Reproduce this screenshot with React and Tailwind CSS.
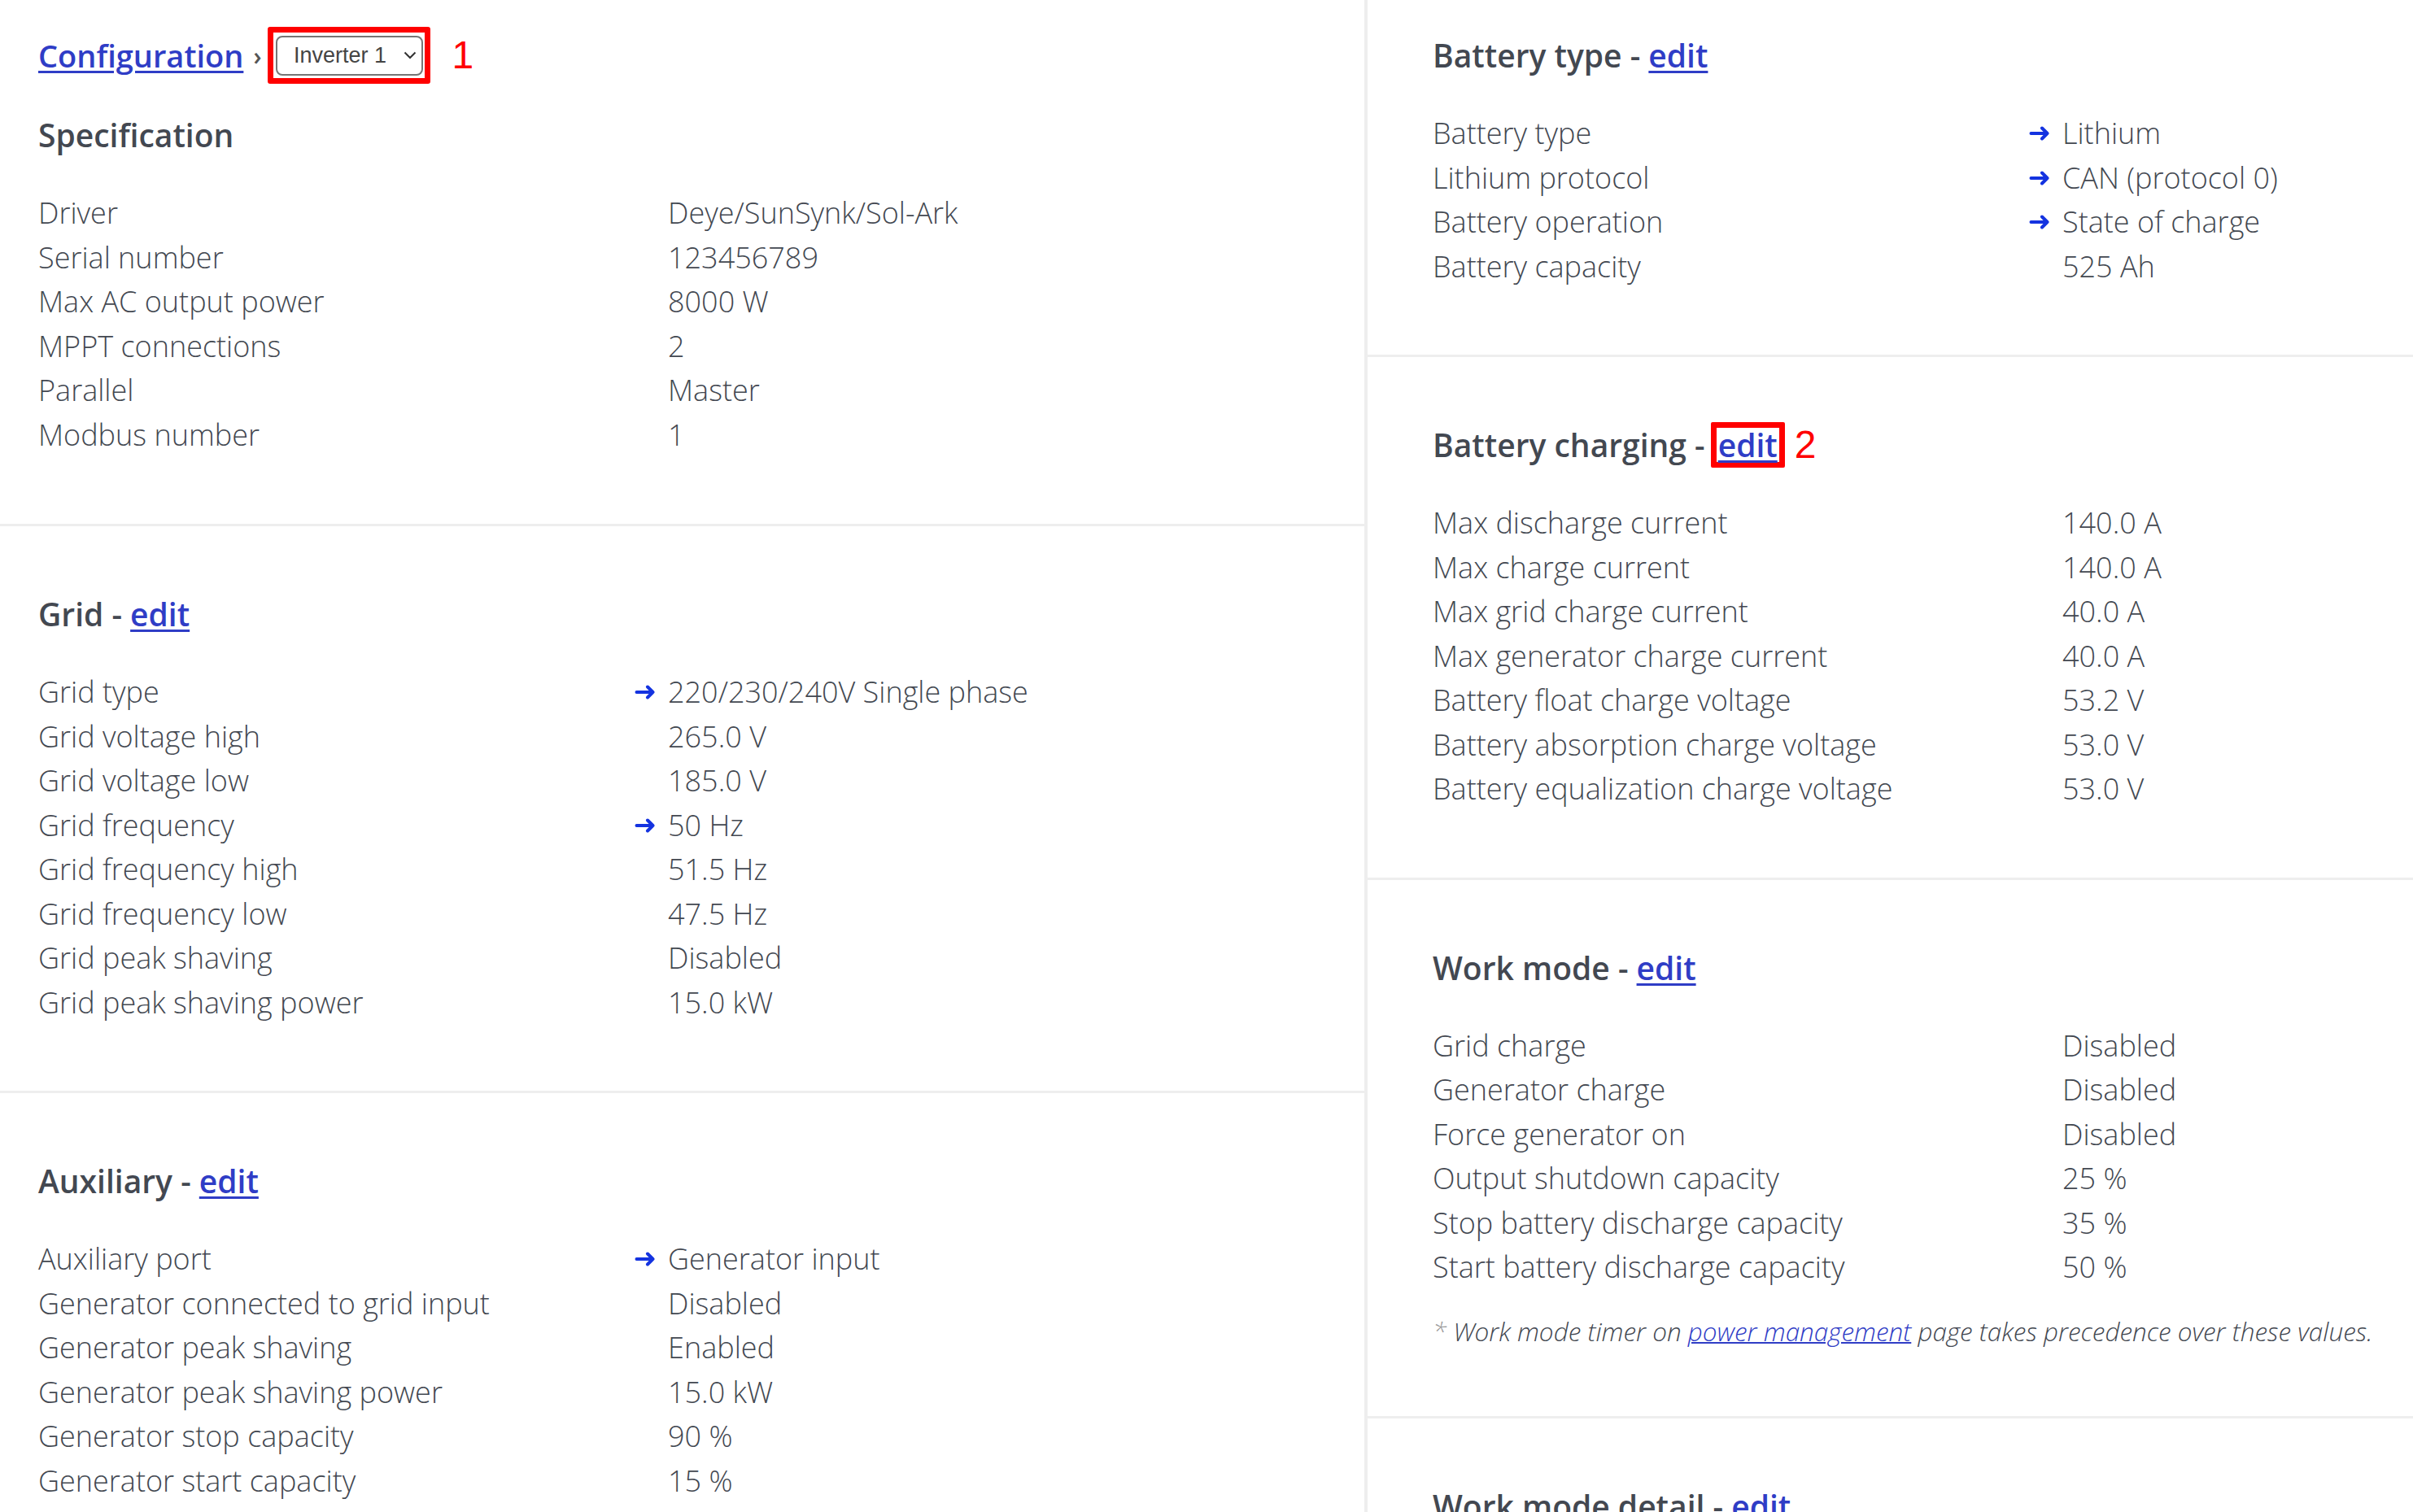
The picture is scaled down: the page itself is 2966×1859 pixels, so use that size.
import React from 'react';

const spec = [
  ['Driver', 'Deye/SunSynk/Sol-Ark'],
  ['Serial number', '123456789'],
  ['Max AC output power', '8000 W'],
  ['MPPT connections', '2'],
  ['Parallel', 'Master'],
  ['Modbus number', '1'],
];

const grid = [
  ['Grid type', '220/230/240V Single phase', true],
  ['Grid voltage high', '265.0 V'],
  ['Grid voltage low', '185.0 V'],
  ['Grid frequency', '50 Hz', true],
  ['Grid frequency high', '51.5 Hz'],
  ['Grid frequency low', '47.5 Hz'],
  ['Grid peak shaving', 'Disabled'],
  ['Grid peak shaving power', '15.0 kW'],
];

const auxiliary = [
  ['Auxiliary port', 'Generator input', true],
  ['Generator connected to grid input', 'Disabled'],
  ['Generator peak shaving', 'Enabled'],
  ['Generator peak shaving power', '15.0 kW'],
  ['Generator stop capacity', '90 %'],
  ['Generator start capacity', '15 %'],
  ['Generator max run time', '24.0 h'],
];

const batteryType = [
  ['Battery type', 'Lithium', true],
  ['Lithium protocol', 'CAN (protocol 0)', true],
  ['Battery operation', 'State of charge', true],
  ['Battery capacity', '525 Ah'],
];

const batteryCharging = [
  ['Max discharge current', '140.0 A'],
  ['Max charge current', '140.0 A'],
  ['Max grid charge current', '40.0 A'],
  ['Max generator charge current', '40.0 A'],
  ['Battery float charge voltage', '53.2 V'],
  ['Battery absorption charge voltage', '53.0 V'],
  ['Battery equalization charge voltage', '53.0 V'],
];

const workMode = [
  ['Grid charge', 'Disabled'],
  ['Generator charge', 'Disabled'],
  ['Force generator on', 'Disabled'],
  ['Output shutdown capacity', '25 %'],
  ['Stop battery discharge capacity', '35 %'],
  ['Start battery discharge capacity', '50 %'],
];

const Arrow = () => (
  <svg width="26" height="18" viewBox="0 0 26 18" fill="none" className="text-[#1433e0]">
    <path d="M2.5 9H22.5M16 2.5L22.5 9L16 15.5" stroke="currentColor" strokeWidth="4" strokeLinecap="round" strokeLinejoin="round" />
  </svg>
);

const Rows = ({ items }) => (
  <div className="mt-[39px]">
    {items.map(([label, value, changed]) => (
      <div key={label} className="flex leading-[54.5px]">
        <div className="w-[733px] shrink-0">{label}</div>
        <div className="w-[41px] shrink-0 flex items-center">{changed && <Arrow />}</div>
        <div>{value}</div>
      </div>
    ))}
  </div>
);

const EditLink = () => (
  <a href="#" className="text-[#2f3dc6] underline decoration-[3px] underline-offset-[4px]">edit</a>
);

const Heading = ({ title, edit }) => (
  <h2 className="text-[39px] font-semibold leading-[60px]">
    {title}
    {edit && <> - <EditLink /></>}
  </h2>
);

const Section = ({ side, first, children }) => (
  <section
    className={`border-b-[3px] border-[#eeeeee] ${side === 'left' ? 'pl-[47px]' : 'pl-[80px]'} ${first ? '' : 'pt-[78px]'} pb-[81px]`}
  >
    {children}
  </section>
);

const App = () => {
  return (
    <div className="flex w-[2966px] h-[1859px] overflow-hidden bg-white text-[#434851] font-['Open_Sans','Liberation_Sans',sans-serif] font-light text-[36px]">
      {/* left column */}
      <div className="w-[1677px] shrink-0">
        <section className="border-b-[3px] border-[#eeeeee] pl-[47px] pt-[34px] pb-[82px]">
          <div className="flex items-center h-[68px]">
            <a href="#" className="text-[38px] font-semibold text-[#2f3dc6] underline decoration-[3px] underline-offset-[4px]">Configuration</a>
            <span className="ml-[12px] mr-[8px] text-[30px] font-semibold text-[#555]">›</span>
            <div className="w-[200px] h-[70px] border-[7px] border-[#ff0000] rounded-[3px] flex items-center justify-center">
              <div className="w-[181px] h-[49px] border-2 border-[#767676] rounded-[8px] flex items-center justify-between pl-[20px] pr-[6px] font-['Liberation_Sans',sans-serif] font-normal text-[27px] text-[#444]">
                <span>Inverter 1</span>
                <svg width="16" height="10" viewBox="0 0 16 10" fill="none">
                  <path d="M1.5 1.5L8 8L14.5 1.5" stroke="#333" strokeWidth="2" />
                </svg>
              </div>
            </div>
            <span className="ml-[26px] text-[48px] text-[#ff0000] font-['Liberation_Sans',sans-serif] font-normal">1</span>
          </div>
          <div className="mt-[34px]">
            <Heading title="Specification" />
          </div>
          <Rows items={spec} />
        </section>

        <Section side="left">
          <Heading title="Grid" edit />
          <Rows items={grid} />
        </Section>

        <Section side="left">
          <Heading title="Auxiliary" edit />
          <Rows items={auxiliary} />
        </Section>
      </div>

      <div className="w-[4px] shrink-0 bg-[#eeeeee]" />

      {/* right column */}
      <div className="flex-1">
        <section className="border-b-[3px] border-[#eeeeee] pl-[80px] pt-[38px] pb-[81px]">
          <Heading title="Battery type" edit />
          <Rows items={batteryType} />
        </section>

        <Section side="right">
          <h2 className="text-[39px] font-semibold leading-[60px] flex items-center">
            <span>Battery charging -</span>
            <span className="ml-[7px] border-[7px] border-[#ff0000] rounded-[2px] px-[2px] leading-[42px]">
              <EditLink />
            </span>
            <span className="ml-[12px] text-[48px] text-[#ff0000] font-['Liberation_Sans',sans-serif] font-normal">2</span>
          </h2>
          <Rows items={batteryCharging} />
        </Section>

        <Section side="right">
          <Heading title="Work mode" edit />
          <Rows items={workMode} />
          <p className="mt-[28px] text-[31.5px] italic leading-[46px]">
            <span className="text-[#999]">*</span> Work mode timer on{' '}
            <a href="#" className="text-[#2f3dc6] underline decoration-2">power management</a>{' '}
            page takes precedence over these values.
          </p>
        </Section>

        <Section side="right">
          <Heading title="Work mode detail" edit />
          <Rows items={[['Work mode', 'Selling first']]} />
        </Section>
      </div>
    </div>
  );
};

export default App;
